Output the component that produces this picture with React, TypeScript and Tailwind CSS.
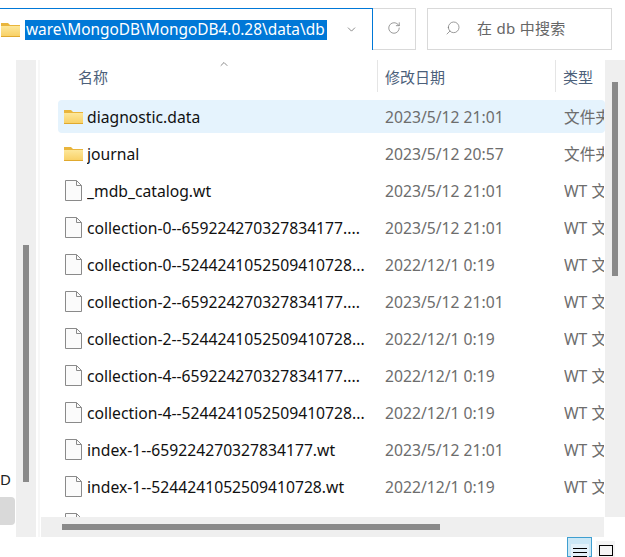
import { RotateCw, ChevronDown, ChevronUp, Search } from "lucide-react";

const files = [
  { name: "diagnostic.data", date: "2023/5/12 21:01", type: "文件夹", folder: true, selected: true },
  { name: "journal", date: "2023/5/12 20:57", type: "文件夹", folder: true },
  { name: "_mdb_catalog.wt", date: "2023/5/12 21:01", type: "WT 文件" },
  { name: "collection-0--659224270327834177....", date: "2023/5/12 21:01", type: "WT 文件" },
  { name: "collection-0--5244241052509410728...", date: "2022/12/1 0:19", type: "WT 文件" },
  { name: "collection-2--659224270327834177....", date: "2023/5/12 21:01", type: "WT 文件" },
  { name: "collection-2--5244241052509410728...", date: "2022/12/1 0:19", type: "WT 文件" },
  { name: "collection-4--659224270327834177....", date: "2022/12/1 0:19", type: "WT 文件" },
  { name: "collection-4--5244241052509410728...", date: "2022/12/1 0:19", type: "WT 文件" },
  { name: "index-1--659224270327834177.wt", date: "2023/5/12 21:01", type: "WT 文件" },
  { name: "index-1--5244241052509410728.wt", date: "2022/12/1 0:19", type: "WT 文件" },
  { name: "", date: "", type: "" },
];

function FolderIcon() {
  return (
    <svg width="19" height="15" viewBox="0 0 19 15" className="shrink-0">
      <defs>
        <linearGradient id="folderFill" x1="0" y1="0" x2="0" y2="1">
          <stop offset="0" stopColor="#fde79a" />
          <stop offset="1" stopColor="#f8cf62" />
        </linearGradient>
      </defs>
      <path d="M0 1h7l2 2h10V15H0z" fill="#e9b53c" />
      <path d="M0 4h19V14a1 1 0 0 1-1 1H1a1 1 0 0 1-1-1z" fill="url(#folderFill)" />
      <path d="M0 14h19v1H0z" fill="#e0a92e" />
    </svg>
  );
}

function FileIcon() {
  return (
    <svg width="17" height="21" viewBox="0 0 17 21" className="shrink-0">
      <path d="M.5.5h11l5 5v15H.5z" fill="#fbfbfb" stroke="#8a8a8a" />
      <path d="M11.5.5v5h5" fill="none" stroke="#8a8a8a" />
    </svg>
  );
}

export default function App() {
  return (
    <div className="h-[557px] w-[625px] overflow-hidden bg-white font-['Noto_Sans','Noto_Sans_CJK_SC',sans-serif] text-[15.7px]">
      {/* address bar */}
      <div className="flex h-[60px] items-start pt-2">
        <div className="flex h-[42px] w-[373px] items-center border-t border-r border-[#0078d7]">
          <div className="ml-[1px] flex w-[24px] shrink-0">
            <FolderIcon />
          </div>
          <span className="w-[302px] shrink-0 overflow-hidden bg-[#0078d7] pl-[1px] text-[15.4px] leading-[20px] whitespace-nowrap text-white">
            ware\MongoDB\MongoDB4.0.28\data\db
          </span>
          <ChevronDown className="ml-[18px] size-[13px] text-[#555]" strokeWidth={1.25} />
        </div>
        <div className="flex h-[42px] w-[43px] items-center justify-center border-y border-r border-[#d9d9d9] pb-[3px]">
          <RotateCw className="size-[14px] text-[#777]" strokeWidth={1.25} />
        </div>
        <div className="ml-[11px] flex h-[42px] w-[185px] items-center border border-[#d9d9d9] pb-[2px] pl-[17px] text-[#666]">
          <Search className="size-[16px] -scale-x-100 text-[#777]" strokeWidth={1.1} />
          <span className="ml-[16px] text-[15px] tracking-[0.3px]">在 db 中搜索</span>
        </div>
      </div>

      <div className="flex h-[497px]">
        {/* nav pane edge */}
        <div className="flex w-[16px] flex-col pt-[408px]">
          <span className="h-[22px] text-[15px] leading-[22px] text-[#222]">D</span>
          <div className="mt-[7px] h-[28px] w-[15px] rounded-r-sm bg-[#d9d9d9]" />
        </div>
        <div className="h-[477px] w-[20px] bg-[#efefef] pt-[185px] pl-[7px]">
          <div className="h-[237px] w-[6px] bg-[#8a8a8a]" />
        </div>
        <div className="w-[2px]" />
        <div className="h-[477px] w-[2px] bg-[#f7f7f7]" />
        <div className="w-[1px]" />

        {/* file list */}
        <div className="flex h-[497px] w-[584px] flex-col">
          <div className="flex h-[457px]">
            <div className="w-[564px] overflow-hidden">
              <div className="relative flex h-[40px] text-[15px] text-[#4c607a]">
                <ChevronUp className="absolute top-[-2px] left-[177px] size-[12px] text-[#666]" strokeWidth={1.5} />
                <div className="flex h-[32px] w-[336px] items-end pl-[37px] leading-[30px]">名称</div>
                <div className="flex h-[32px] w-[178px] items-end border-l border-[#e5e5e5] pl-[7px] leading-[30px]">修改日期</div>
                <div className="flex h-[32px] flex-1 items-end border-l border-[#e5e5e5] pl-[7px] leading-[30px]">类型</div>
              </div>
              <div className="flex flex-col gap-[4px] pl-[17px]">
                {files.map((f, i) => (
                  <div
                    key={i}
                    className={`flex h-[33px] shrink-0 items-center whitespace-nowrap ${f.selected ? "rounded-sm bg-[#e5f3fd]" : ""}`}
                  >
                    <div className="flex w-[29px] shrink-0 justify-center pl-[1px]">
                      {f.folder ? <FolderIcon /> : <FileIcon />}
                    </div>
                    <div className="w-[298px] shrink-0 overflow-hidden pt-[2px] text-[#111]">{f.name}</div>
                    <div className="w-[179px] shrink-0 pt-[2px] text-[#6d6d6d]">{f.date}</div>
                    <div className="w-[40px] shrink-0 overflow-hidden pt-[2px] text-[#6d6d6d]">{f.type}</div>
                  </div>
                ))}
              </div>
            </div>
            <div className="w-[20px] bg-[#efefef] pt-[22px] pl-[7px]">
              <div className="h-[194px] w-[6px] bg-[#8a8a8a]" />
            </div>
          </div>
          <div className="h-[20px] w-[563px] bg-[#efefef] pt-[7px] pl-[21px]">
            <div className="h-[6px] w-[378px] bg-[#8a8a8a]" />
          </div>
          <div className="relative h-[20px]">
            <div className="absolute top-[0px] left-[526px] flex h-[20px] w-[25px] justify-center border border-[#3f9fd0] bg-[#cce8f6]">
              <div className="mt-[6px] flex h-[14px] w-[18px] flex-col gap-[3px] bg-[#e3f2fa] px-[2px] pt-[4px]">
                <div className="h-px shrink-0 bg-black" />
                <div className="h-px shrink-0 bg-black" />
                <div className="h-px shrink-0 bg-black" />
              </div>
            </div>
            <div className="absolute top-[4px] left-[555px] h-[16px] w-[19px] bg-[#f5f5f5] pt-[4px] pl-[3px]">
              <div className="h-[11px] w-[14px] border border-black" />
            </div>
          </div>
        </div>
      </div>
    </div>
  );
}
